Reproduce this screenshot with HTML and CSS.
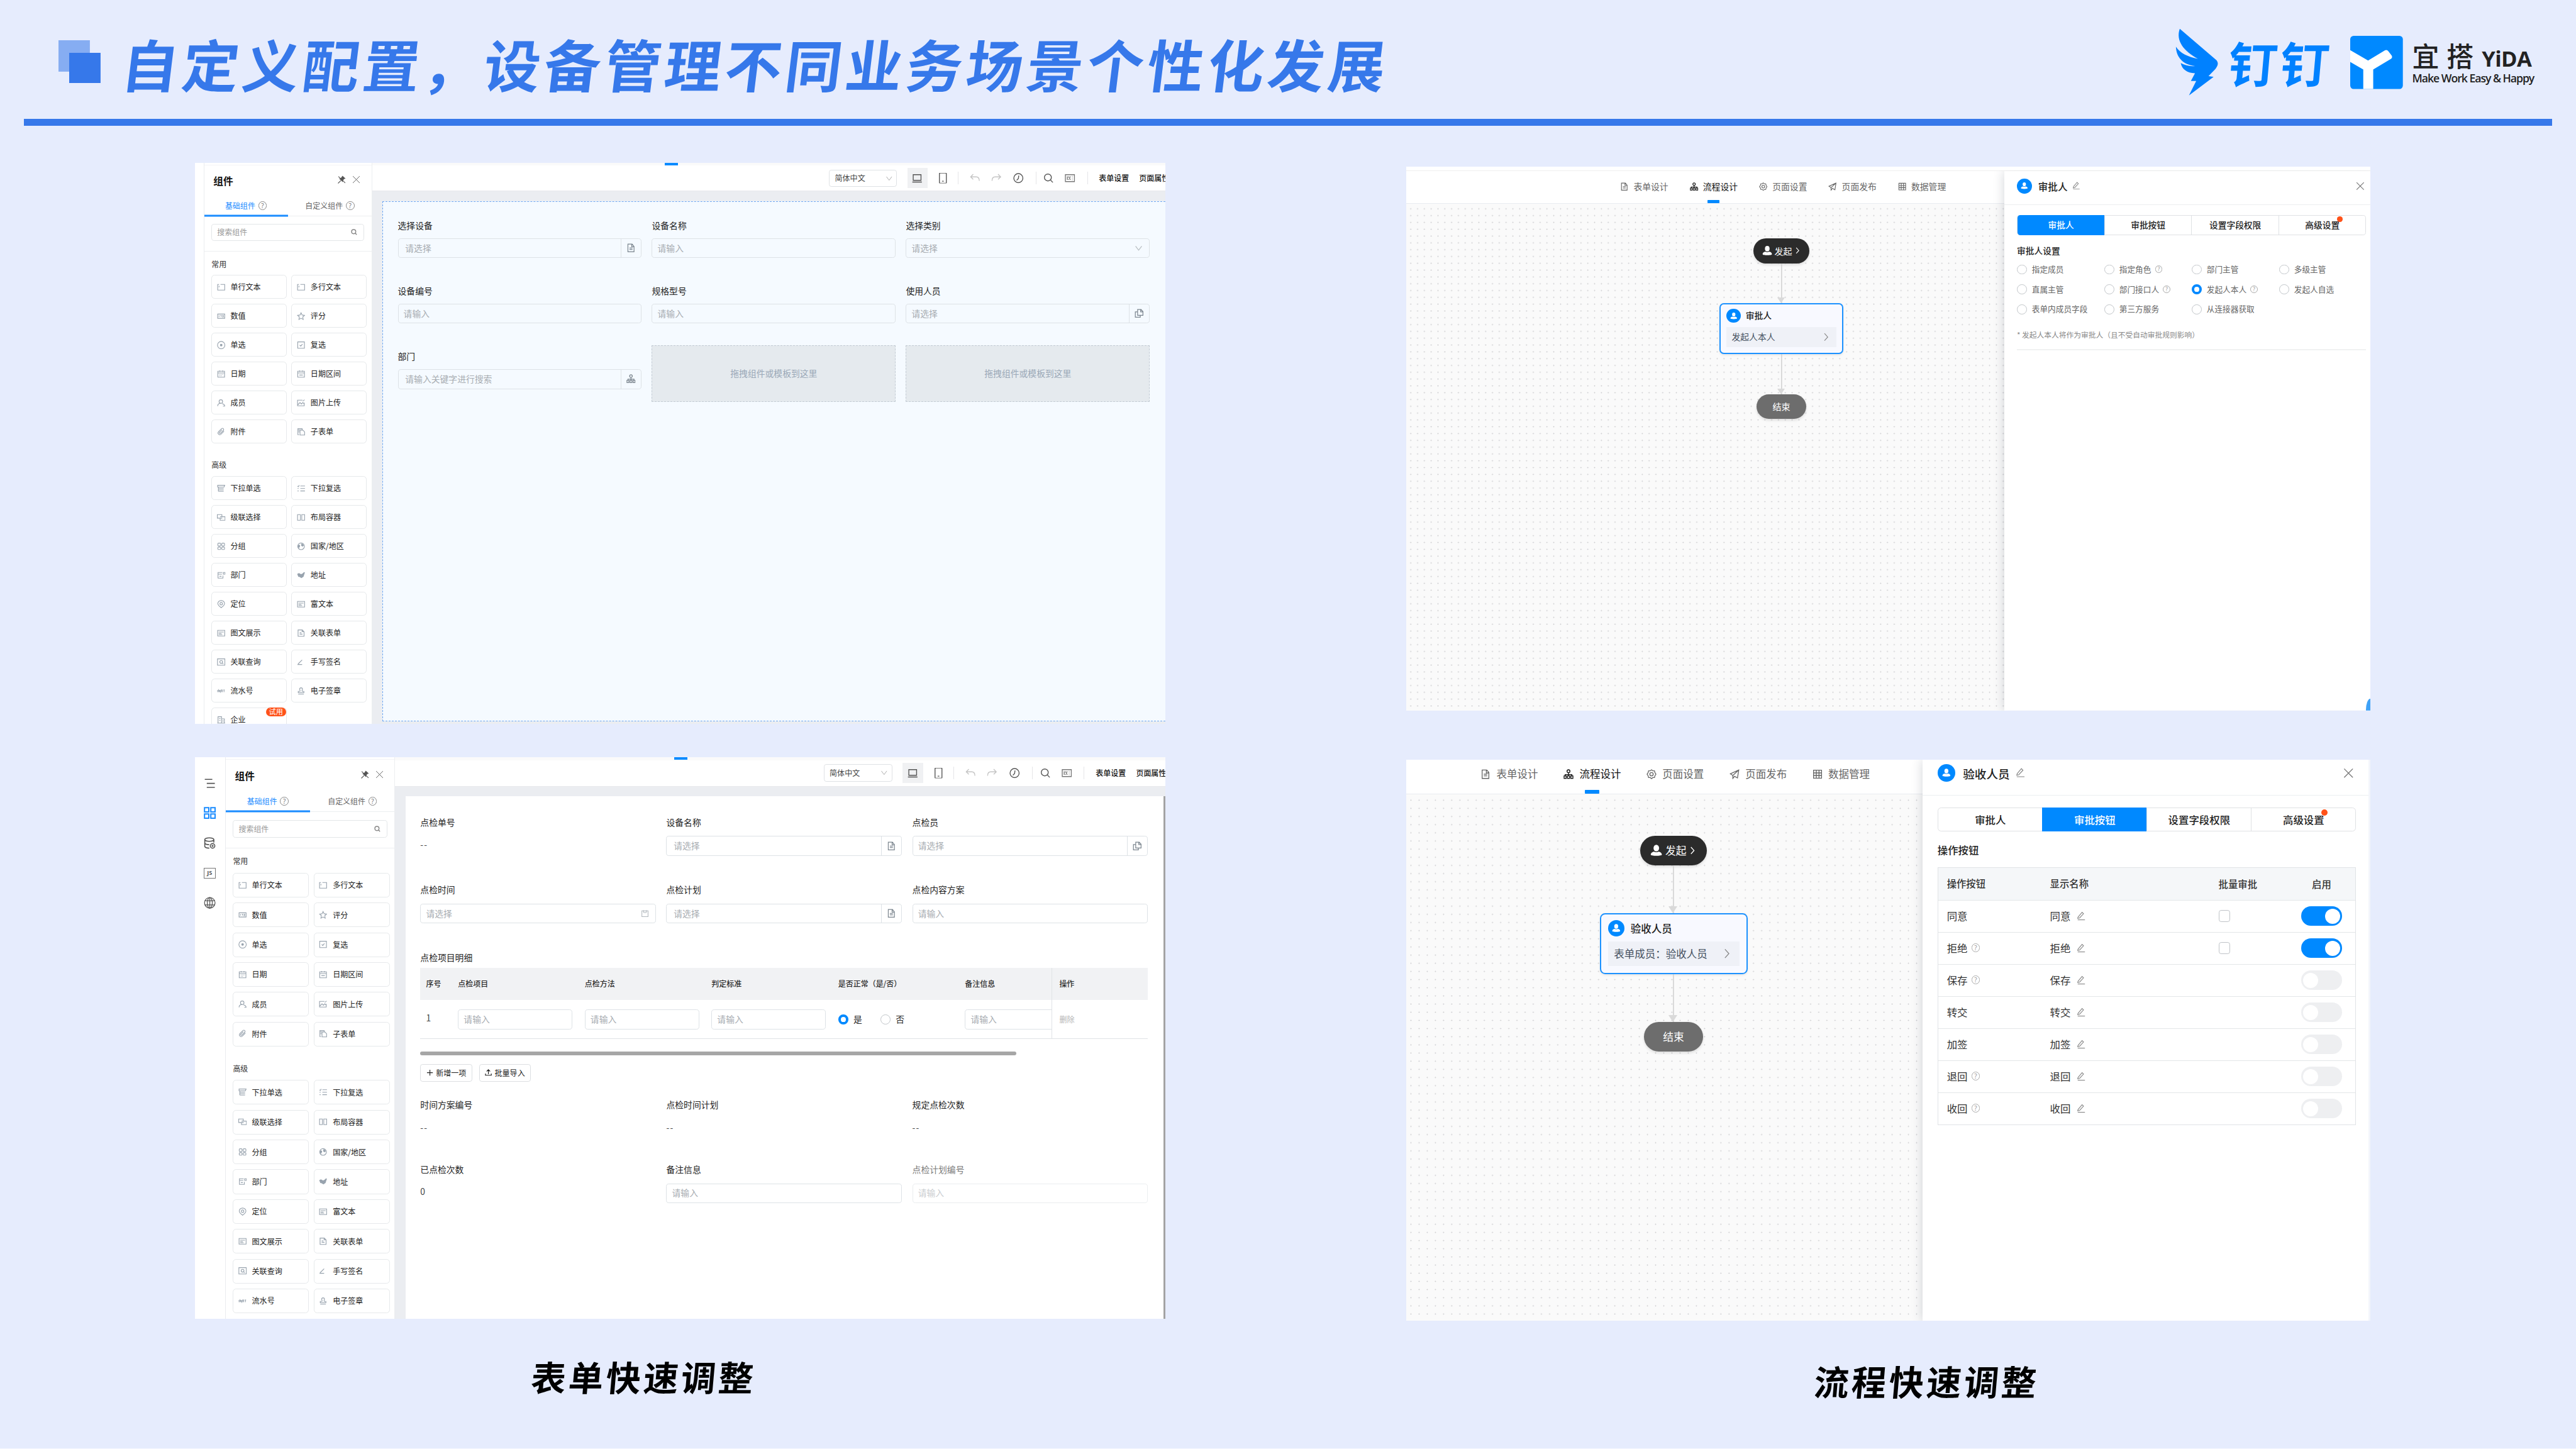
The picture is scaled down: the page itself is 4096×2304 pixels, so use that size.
FILE: index.html
```html
<!DOCTYPE html>
<html lang="zh-CN">
<head>
<meta charset="utf-8">
<title>自定义配置</title>
<link rel="stylesheet" href="styles.css">
</head>
<body>
<svg class="sprite" aria-hidden="true">
  <symbol id="i-input" viewBox="0 0 24 24"><path d="M6 4H2v16h20V4H10M6 8v4"/></symbol>
  <symbol id="i-number" viewBox="0 0 24 24"><path d="M2 6h20v12H2zM6 10v4M10 10h2v4M15 10h3v4h-3"/></symbol>
  <symbol id="i-star" viewBox="0 0 24 24"><path d="M12 2.500l3 6.300 6.800.9-5 4.700 1.300 6.800L12 17.900l-6.100 3.300 1.300-6.800-5-4.700 6.800-.9z"/></symbol>
  <symbol id="i-radio" viewBox="0 0 24 24"><circle cx="12" cy="12" r="10.500"/><circle class="fill" cx="12" cy="12" r="3.500"/></symbol>
  <symbol id="i-check" viewBox="0 0 24 24"><path d="M2.500 3h19v18h-19zM8 12l3 3 5-6"/></symbol>
  <symbol id="i-date" viewBox="0 0 24 24"><path d="M2.500 4h19v17h-19zM2.500 9h19M8 2v4M16 2v4M7 13h2M11 13h2M15 13h2M7 17h2M11 17h2"/></symbol>
  <symbol id="i-range" viewBox="0 0 24 24"><path d="M2.500 4h19v17h-19zM2.500 9h19M8 2v4M16 2v4M7 15h10"/></symbol>
  <symbol id="i-user" viewBox="0 0 24 24"><circle cx="11" cy="8" r="5"/><path d="M2 21c0-5 4-8 9-8M15 14c4 1 7 3 7 7h-5"/></symbol>
  <symbol id="i-image" viewBox="0 0 24 24"><path d="M21 11v9H2V4h14M3 17l6-6 4 4 4-4 4 4M17 7l5-4"/></symbol>
  <symbol id="i-clip" viewBox="0 0 24 24"><path d="M20 10l-9 9a5 5 0 0 1-7-7l9-9a3.500 3.500 0 0 1 5 5l-8 8a2 2 0 0 1-3-3l7-7"/></symbol>
  <symbol id="i-subform" viewBox="0 0 24 24"><path d="M6 20H3V3h12v3M9 7h8l5 5v9H9zM3 7h6M3 12h6"/></symbol>
  <symbol id="i-drop" viewBox="0 0 24 24"><path d="M2 3h20l-2 5H2zM4 12h15M4 16h15M4 20h15M4 8v12"/></symbol>
  <symbol id="i-list" viewBox="0 0 24 24"><path d="M10 5h13M10 12h13M10 19h13M2 5l2 2 3-4M2 12h3M2 19h3"/></symbol>
  <symbol id="i-cascade" viewBox="0 0 24 24"><path d="M8 14H1V4h13v5M9 10h14v10H9v-6h6"/></symbol>
  <symbol id="i-columns" viewBox="0 0 24 24"><path d="M2 4h8v16H2zM14 4h8v16h-8z"/></symbol>
  <symbol id="i-group" viewBox="0 0 24 24"><rect x="2.500" y="3" width="8" height="8" rx="2"/><rect x="13.500" y="3" width="8" height="8" rx="2"/><rect x="2.500" y="14" width="8" height="7" rx="2"/><rect x="13.500" y="14" width="8" height="7" rx="2"/></symbol>
  <symbol id="i-globe" viewBox="0 0 24 24"><circle cx="12" cy="12" r="9.500"/><path class="fill" d="M4 8c4-1 6 1 5 4s-3 3-3 6c-3-3-4-7-2-10zM13 4c4 0 6 3 7 6l-4 3-4-3z"/></symbol>
  <symbol id="i-dept" viewBox="0 0 24 24"><path d="M15 4H3v16h14V13M3 9h11M7 15h6M18 4h5v5h-5z"/></symbol>
  <symbol id="i-map" viewBox="0 0 24 24"><path class="fill" d="M1 8l5-2 6 3 4-2 4-4 3 1-2 6-2 6-6 4-5-3-4-1z"/></symbol>
  <symbol id="i-pin" viewBox="0 0 24 24"><path d="M12 22C6 18 2.500 14 2.500 10a9.500 8.500 0 0 1 19 0c0 4-3.500 8-9.500 12z"/><circle cx="12" cy="10.500" r="3.500"/></symbol>
  <symbol id="i-rich" viewBox="0 0 24 24"><path d="M2 4h20v16H2zM5 9h14M5 13h8M5 16h10"/></symbol>
  <symbol id="i-form" viewBox="0 0 24 24"><path d="M3.500 3h12l5 5v13h-17zM8 11h5M8 15h8M15 3v5h5"/></symbol>
  <symbol id="i-query" viewBox="0 0 24 24"><path d="M1.500 3h21v18h-21z"/><circle cx="12" cy="11.500" r="4"/><path d="M15 14.500l3 3"/></symbol>
  <symbol id="i-sign" viewBox="0 0 24 24"><path d="M4 17L15 6M4 17l-1 2h12"/></symbol>
  <symbol id="i-serial" viewBox="0 0 24 24"><path d="M2 9v6M5 15V9l4 6V9M12 15V9h3v6M18 9h4M20 9v6"/></symbol>
  <symbol id="i-stamp" viewBox="0 0 24 24"><path d="M9 13c1-3-1-4-1-6a4 4 0 0 1 8 0c0 2-2 3-1 6h5v4H4v-4zM4 21h16"/></symbol>
  <symbol id="i-company" viewBox="0 0 24 24"><path d="M3 21V3h10v18M13 9h8v12M1 21h22M6 8h4M6 13h4M17 13v4"/></symbol>
  <symbol id="i-search" viewBox="0 0 24 24"><circle cx="10.500" cy="10.500" r="8"/><path d="M16.500 16.500L22 22"/></symbol>
  <symbol id="i-close" viewBox="0 0 24 24"><path d="M2 2l20 20M22 2L2 22"/></symbol>
  <symbol id="i-unpin" viewBox="0 0 24 24"><path d="M2 3l20 19M1 23l8-8"/><path class="fill" d="M14 1l9 8-4 1-4 5v5L4 9l5-1z"/></symbol>
  <symbol id="i-chev" viewBox="0 0 24 24"><path d="M3 6l9 12 9-12"/></symbol>
  <symbol id="i-right" viewBox="0 0 24 24"><path d="M7 2l9 10-9 10"/></symbol>
  <symbol id="i-laptop" viewBox="0 0 24 24"><path d="M3 4h18v13H3zM1 21h22"/></symbol>
  <symbol id="i-phone" viewBox="0 0 24 24"><rect x="4" y="0" width="16" height="24" rx="2"/><path d="M10 19h4"/></symbol>
  <symbol id="i-undo" viewBox="0 0 24 24"><path d="M8 3L2 9l6 6M2 9h13c5 0 7 3 7 9"/></symbol>
  <symbol id="i-redo" viewBox="0 0 24 24"><path d="M16 3l6 6-6 6M22 9H9c-5 0-7 3-7 9"/></symbol>
  <symbol id="i-clock" viewBox="0 0 24 24"><circle cx="12" cy="12" r="10.500"/><path d="M13 6l-1 7-4 4"/></symbol>
  <symbol id="i-keys" viewBox="0 0 24 24"><path d="M1.500 4h21v16h-21zM6 8v8M9 8v3M9 14v2M13 8l-2 4 2 4M17 8h1M17 12h1M17 16h1"/></symbol>
  <symbol id="i-file" viewBox="0 0 24 24"><path d="M4 2h11l5 6v14H4zM14 2v7h6M8 12h8M8 16h8"/></symbol>
  <symbol id="i-copy" viewBox="0 0 24 24"><path d="M8 8H2v14h13v-5M8 2h9l5 5v10H8zM16 2v6h6"/></symbol>
  <symbol id="i-tree" viewBox="0 0 24 24"><circle cx="12" cy="5" r="3.500"/><path d="M12 8.500V13M4 16v-3h16v3M12 13v3"/><rect x="1.500" y="16" width="5" height="6"/><rect x="9.500" y="16" width="5" height="6"/><rect x="17.500" y="16" width="5" height="6"/></symbol>
  <symbol id="i-gear" viewBox="0 0 24 24"><path d="M12 1.500l3 2.500h4l1 4 2.500 4L20 16l-1 4h-4l-3 2.500L9 20H5l-1-4-2.500-4L4 8l1-4h4z"/><circle cx="12" cy="12" r="4"/></symbol>
  <symbol id="i-plane" viewBox="0 0 24 24"><path d="M22 2L2 11l6 4v7l4-5 7 4zM8 15L22 2"/></symbol>
  <symbol id="i-table" viewBox="0 0 24 24"><path d="M2.500 2.500h19v19h-19zM2.500 9h19M2.500 15h19M9 2.500v19M15.500 2.500v19"/></symbol>
  <symbol id="i-pen" viewBox="0 0 24 24"><path d="M4 15L15 2l4 4L8 18l-5 1zM3 23h20"/></symbol>
  <symbol id="i-person" viewBox="0 0 24 24"><ellipse class="fill" cx="12" cy="7" rx="5.500" ry="6.500"/><path class="fill" d="M1 20c0-4 4-6 7-6 2 1.500 6 1.500 8 0 3 0 7 2 7 6 0 3-22 3-22 0z"/></symbol>
  <symbol id="i-outline" viewBox="0 0 24 24"><path d="M2 4h15M6 12h16M6 20h16"/></symbol>
  <symbol id="i-blocks" viewBox="0 0 24 24"><path d="M1.500 1.500h8.500v8.500H1.500zM14 1.500h8.500v8.500H14zM1.500 14h8.500v8.500H1.500zM14 14h8.500v8.500H14z"/></symbol>
  <symbol id="i-data" viewBox="0 0 24 24"><ellipse cx="11" cy="5" rx="9" ry="3.500"/><path d="M2 5v14c1 2 5 3 9 3M20 5v6M2 12c1 2 4 3 9 3"/><circle cx="17.500" cy="17.500" r="4.500"/><circle cx="17.500" cy="17.500" r="1"/></symbol>
  <symbol id="i-world" viewBox="0 0 24 24"><circle cx="12" cy="12" r="10.500"/><ellipse cx="12" cy="12" rx="5" ry="10.500"/><path d="M2 8h20M2 16h20M12 1.500v21"/></symbol>
  <symbol id="i-cal" viewBox="0 0 24 24"><path d="M3 4h18v17H3zM8 2v7M16 2v7M8 9h8"/></symbol>
  <symbol id="i-plus" viewBox="0 0 24 24"><path d="M12 2v20M2 12h20"/></symbol>
  <symbol id="i-upload" viewBox="0 0 24 24"><path d="M12 17V3M6 8l6-6 6 6M2 15v6h20v-6"/></symbol>
</svg>

<header class="header">
  <div class="mark"></div>
  <h1 class="title">自定义配置，设备管理不同业务场景个性化发展</h1>
  <div class="brands">
    <svg class="wing" viewBox="0 0 95 145"><path d="M13 5L89 70C93 75 93 80 87 88L72.500 103 83 104.500 32 143 47 113H36L44.500 97C28 97 17 88 15 76 24 81 34 83 44.500 82 20 79 6 65 5 42 14 56 30 63 50.500 67 22 52 4 30 13 5z"/></svg>
    <span class="ding">钉钉</span>
    <svg class="ylogo" viewBox="0 0 109 110"><rect width="109" height="110" rx="7" fill="#0089ff"/><path fill="#fff" d="M0 29.500L37 51 72 30q4-2 7 2l7 9q2 4-2 7L47.600 69.600V110H27V69.600L0 54z"/></svg>
    <div class="yida">
      <div class="yida-name"><span class="yida-cn">宜搭</span><span class="yida-en">YiDA</span></div>
      <div class="yida-tag">Make Work Easy &amp; Happy</div>
    </div>
  </div>
</header>

<main class="board">
  <section class="col col-left">
    <div class="shot shot-a">
      <aside class="palette">
        <div class="pal-head"><b>组件</b><svg class="ic"><use href="#i-unpin"/></svg><svg class="ic thin"><use href="#i-close"/></svg></div>
        <div class="pal-tabs"><div class="on">基础组件<i class="q">?</i></div><div>自定义组件<i class="q">?</i></div></div>
        <div class="pal-search"><div class="box">搜索组件<svg class="ic"><use href="#i-search"/></svg></div></div>
        <div class="pal-title">常用</div>
        <ul class="items">
          <li><svg><use href="#i-input"/></svg>单行文本</li><li><svg><use href="#i-input"/></svg>多行文本</li>
          <li><svg><use href="#i-number"/></svg>数值</li><li><svg><use href="#i-star"/></svg>评分</li>
          <li><svg><use href="#i-radio"/></svg>单选</li><li><svg><use href="#i-check"/></svg>复选</li>
          <li><svg><use href="#i-date"/></svg>日期</li><li><svg><use href="#i-range"/></svg>日期区间</li>
          <li><svg><use href="#i-user"/></svg>成员</li><li><svg><use href="#i-image"/></svg>图片上传</li>
          <li><svg><use href="#i-clip"/></svg>附件</li><li><svg><use href="#i-subform"/></svg>子表单</li>
        </ul>
        <div class="pal-title second">高级</div>
        <ul class="items">
          <li><svg><use href="#i-drop"/></svg>下拉单选</li><li><svg><use href="#i-list"/></svg>下拉复选</li>
          <li><svg><use href="#i-cascade"/></svg>级联选择</li><li><svg><use href="#i-columns"/></svg>布局容器</li>
          <li><svg><use href="#i-group"/></svg>分组</li><li><svg><use href="#i-globe"/></svg>国家/地区</li>
          <li><svg><use href="#i-dept"/></svg>部门</li><li><svg><use href="#i-map"/></svg>地址</li>
          <li><svg><use href="#i-pin"/></svg>定位</li><li><svg><use href="#i-rich"/></svg>富文本</li>
          <li><svg><use href="#i-rich"/></svg>图文展示</li><li><svg><use href="#i-form"/></svg>关联表单</li>
          <li><svg><use href="#i-query"/></svg>关联查询</li><li><svg><use href="#i-sign"/></svg>手写签名</li>
          <li><svg><use href="#i-serial"/></svg>流水号</li><li><svg><use href="#i-stamp"/></svg>电子签章</li>
          <li><svg><use href="#i-company"/></svg>企业<em class="trial">试用</em></li>
        </ul>
      </aside>
      <div class="editor">
        <div class="strip"><span></span></div>
        <div class="toolbar">
          <div class="lang">简体中文<svg class="ic"><use href="#i-chev"/></svg></div>
          <div class="t-lap"><svg class="ic"><use href="#i-laptop"/></svg></div>
          <div class="t-phone"><svg class="ic"><use href="#i-phone"/></svg></div>
          <div class="t-undo"><svg class="ic"><use href="#i-undo"/></svg></div>
          <div class="t-undo"><svg class="ic"><use href="#i-redo"/></svg></div>
          <div class="t-clock"><svg class="ic"><use href="#i-clock"/></svg></div>
          <div class="t-search"><svg class="ic"><use href="#i-search"/></svg></div>
          <div class="t-keys"><svg class="ic"><use href="#i-keys"/></svg></div>
          <span class="t-text">表单设置</span><span class="t-text">页面属性</span>
        </div>
        <div class="stage">
          <div class="canvas drop-canvas">
            <div class="grid">
              <div class="field"><label>选择设备</label><div class="inp addon">请选择<span><svg class="ic"><use href="#i-file"/></svg></span></div></div>
              <div class="field"><label>设备名称</label><div class="inp">请输入</div></div>
              <div class="field"><label>选择类别</label><div class="inp">请选择<svg class="ic light"><use href="#i-chev"/></svg></div></div>
              <div class="field"><label>设备编号</label><div class="inp">请输入</div></div>
              <div class="field"><label>规格型号</label><div class="inp">请输入</div></div>
              <div class="field"><label>使用人员</label><div class="inp">请选择<span><svg class="ic"><use href="#i-copy"/></svg></span></div></div>
              <div class="field"><label>部门</label><div class="inp addon">请输入关键字进行搜索<span><svg class="ic"><use href="#i-tree"/></svg></span></div></div>
              <div class="zone">拖拽组件或模板到这里</div>
              <div class="zone">拖拽组件或模板到这里</div>
            </div>
          </div>
        </div>
      </div>
    </div>

    <div class="shot shot-b">
      <nav class="rail">
        <svg class="ic"><use href="#i-outline"/></svg>
        <svg class="ic on"><use href="#i-blocks"/></svg>
        <svg class="ic"><use href="#i-data"/></svg>
        <i class="js">JS</i>
        <svg class="ic thin"><use href="#i-world"/></svg>
      </nav>
      <aside class="palette">
        <div class="pal-head"><b>组件</b><svg class="ic"><use href="#i-unpin"/></svg><svg class="ic thin"><use href="#i-close"/></svg></div>
        <div class="pal-tabs"><div class="on">基础组件<i class="q">?</i></div><div>自定义组件<i class="q">?</i></div></div>
        <div class="pal-search"><div class="box">搜索组件<svg class="ic"><use href="#i-search"/></svg></div></div>
        <div class="pal-title">常用</div>
        <ul class="items">
          <li><svg><use href="#i-input"/></svg>单行文本</li><li><svg><use href="#i-input"/></svg>多行文本</li>
          <li><svg><use href="#i-number"/></svg>数值</li><li><svg><use href="#i-star"/></svg>评分</li>
          <li><svg><use href="#i-radio"/></svg>单选</li><li><svg><use href="#i-check"/></svg>复选</li>
          <li><svg><use href="#i-date"/></svg>日期</li><li><svg><use href="#i-range"/></svg>日期区间</li>
          <li><svg><use href="#i-user"/></svg>成员</li><li><svg><use href="#i-image"/></svg>图片上传</li>
          <li><svg><use href="#i-clip"/></svg>附件</li><li><svg><use href="#i-subform"/></svg>子表单</li>
        </ul>
        <div class="pal-title second">高级</div>
        <ul class="items">
          <li><svg><use href="#i-drop"/></svg>下拉单选</li><li><svg><use href="#i-list"/></svg>下拉复选</li>
          <li><svg><use href="#i-cascade"/></svg>级联选择</li><li><svg><use href="#i-columns"/></svg>布局容器</li>
          <li><svg><use href="#i-group"/></svg>分组</li><li><svg><use href="#i-globe"/></svg>国家/地区</li>
          <li><svg><use href="#i-dept"/></svg>部门</li><li><svg><use href="#i-map"/></svg>地址</li>
          <li><svg><use href="#i-pin"/></svg>定位</li><li><svg><use href="#i-rich"/></svg>富文本</li>
          <li><svg><use href="#i-rich"/></svg>图文展示</li><li><svg><use href="#i-form"/></svg>关联表单</li>
          <li><svg><use href="#i-query"/></svg>关联查询</li><li><svg><use href="#i-sign"/></svg>手写签名</li>
          <li><svg><use href="#i-serial"/></svg>流水号</li><li><svg><use href="#i-stamp"/></svg>电子签章</li>
        </ul>
      </aside>
      <div class="editor">
        <div class="strip"><span></span></div>
        <div class="toolbar">
          <div class="lang">简体中文<svg class="ic"><use href="#i-chev"/></svg></div>
          <div class="t-lap"><svg class="ic"><use href="#i-laptop"/></svg></div>
          <div class="t-phone"><svg class="ic"><use href="#i-phone"/></svg></div>
          <div class="t-undo"><svg class="ic"><use href="#i-undo"/></svg></div>
          <div class="t-undo"><svg class="ic"><use href="#i-redo"/></svg></div>
          <div class="t-clock"><svg class="ic"><use href="#i-clock"/></svg></div>
          <div class="t-search"><svg class="ic"><use href="#i-search"/></svg></div>
          <div class="t-keys"><svg class="ic"><use href="#i-keys"/></svg></div>
          <span class="t-text">表单设置</span><span class="t-text">页面属性</span>
        </div>
        <div class="stage">
          <div class="canvas white-canvas">
            <div class="grid">
              <div class="field"><label>点检单号</label><p>--</p></div>
              <div class="field"><label>设备名称</label><div class="inp addon">请选择<span><svg class="ic"><use href="#i-file"/></svg></span></div></div>
              <div class="field"><label>点检员</label><div class="inp">请选择<span><svg class="ic"><use href="#i-copy"/></svg></span></div></div>
              <div class="field"><label>点检时间</label><div class="inp">请选择<svg class="ic light"><use href="#i-cal"/></svg></div></div>
              <div class="field"><label>点检计划</label><div class="inp addon">请选择<span><svg class="ic"><use href="#i-file"/></svg></span></div></div>
              <div class="field"><label>点检内容方案</label><div class="inp">请输入</div></div>
            </div>
            <div class="field-title">点检项目明细</div>
            <div class="sub">
              <div class="sub-row sub-head"><span>序号</span><span>点检项目</span><span>点检方法</span><span>判定标准</span><span>是否正常（是/否）</span><span>备注信息</span><span class="fixed">操作</span></div>
              <div class="sub-row"><span class="no">1</span><span><i class="inp">请输入</i></span><span><i class="inp">请输入</i></span><span><i class="inp">请输入</i></span><span class="yn"><i class="rd on"></i>是<i class="rd"></i>否</span><span class="cut"><i class="inp">请输入</i></span><span class="fixed del">删除</span></div>
            </div>
            <div class="hscroll"></div>
            <div class="btns"><span><svg class="ic"><use href="#i-plus"/></svg>新增一项</span><span><svg class="ic"><use href="#i-upload"/></svg>批量导入</span></div>
            <div class="grid lower">
              <div class="field"><label>时间方案编号</label><p>--</p></div>
              <div class="field"><label>点检时间计划</label><p>--</p></div>
              <div class="field"><label>规定点检次数</label><p>--</p></div>
              <div class="field"><label>已点检次数</label><p>0</p></div>
              <div class="field"><label>备注信息</label><div class="inp">请输入</div></div>
              <div class="field dim"><label>点检计划编号</label><div class="inp">请输入</div></div>
            </div>
          </div>
        </div>
      </div>
    </div>
    <p class="caption">表单快速调整</p>
  </section>

  <section class="col col-right">
    <div class="shot shot-c">
      <div class="topline"></div>
      <div class="split">
        <div class="pane">
          <nav class="ptabs">
            <span><svg class="ic"><use href="#i-file"/></svg>表单设计</span>
            <span class="on"><svg class="ic"><use href="#i-tree"/></svg>流程设计</span>
            <span><svg class="ic"><use href="#i-gear"/></svg>页面设置</span>
            <span><svg class="ic"><use href="#i-plane"/></svg>页面发布</span>
            <span><svg class="ic"><use href="#i-table"/></svg>数据管理</span>
          </nav>
          <div class="flow">
            <div class="pill start"><svg class="ic"><use href="#i-person"/></svg>发起<svg class="ic arr"><use href="#i-right"/></svg></div>
            <div class="link"></div>
            <div class="node">
              <div class="node-head"><i class="ava"><svg class="ic"><use href="#i-person"/></svg></i>审批人</div>
              <div class="node-body">发起人本人<svg class="ic"><use href="#i-right"/></svg></div>
            </div>
            <div class="link"></div>
            <div class="pill end">结束</div>
          </div>
        </div>
        <aside class="drawer">
          <div class="dr-head"><i class="ava"><svg class="ic"><use href="#i-person"/></svg></i><b>审批人</b><svg class="ic pen"><use href="#i-pen"/></svg><svg class="ic x"><use href="#i-close"/></svg></div>
          <div class="seg"><span class="on">审批人</span><span>审批按钮</span><span>设置字段权限</span><span><em>高级设置</em></span></div>
          <div class="dr-title">审批人设置</div>
          <div class="radios">
            <span><i class="rd"></i>指定成员</span><span><i class="rd"></i>指定角色<i class="q">?</i></span><span><i class="rd"></i>部门主管</span><span><i class="rd"></i>多级主管</span>
            <span><i class="rd"></i>直属主管</span><span><i class="rd"></i>部门接口人<i class="q">?</i></span><span><i class="rd on"></i>发起人本人<i class="q">?</i></span><span><i class="rd"></i>发起人自选</span>
            <span><i class="rd"></i>表单内成员字段</span><span><i class="rd"></i>第三方服务</span><span><i class="rd"></i>从连接器获取</span>
          </div>
          <p class="note">* 发起人本人将作为审批人（且不受自动审批规则影响）</p>
          <div class="fab"></div>
        </aside>
      </div>
    </div>

    <div class="shot shot-d">
      <div class="split">
        <div class="pane">
          <nav class="ptabs">
            <span><svg class="ic"><use href="#i-file"/></svg>表单设计</span>
            <span class="on"><svg class="ic"><use href="#i-tree"/></svg>流程设计</span>
            <span><svg class="ic"><use href="#i-gear"/></svg>页面设置</span>
            <span><svg class="ic"><use href="#i-plane"/></svg>页面发布</span>
            <span><svg class="ic"><use href="#i-table"/></svg>数据管理</span>
          </nav>
          <div class="flow">
            <div class="pill start"><svg class="ic"><use href="#i-person"/></svg>发起<svg class="ic arr"><use href="#i-right"/></svg></div>
            <div class="link"></div>
            <div class="node">
              <div class="node-head"><i class="ava"><svg class="ic"><use href="#i-person"/></svg></i>验收人员</div>
              <div class="node-body">表单成员：验收人员<svg class="ic"><use href="#i-right"/></svg></div>
            </div>
            <div class="link"></div>
            <div class="pill end">结束</div>
          </div>
        </div>
        <aside class="drawer">
          <div class="dr-head"><i class="ava"><svg class="ic"><use href="#i-person"/></svg></i><b>验收人员</b><svg class="ic pen"><use href="#i-pen"/></svg><svg class="ic x"><use href="#i-close"/></svg></div>
          <div class="seg"><span>审批人</span><span class="on">审批按钮</span><span>设置字段权限</span><span><em>高级设置</em></span></div>
          <div class="dr-title">操作按钮</div>
          <div class="ops">
            <div class="op op-head"><span>操作按钮</span><span>显示名称</span><span>批量审批</span><span>启用</span></div>
            <div class="op"><span>同意</span><span>同意<svg class="ic"><use href="#i-pen"/></svg></span><span><i class="cb"></i></span><span><i class="sw on"></i></span></div>
            <div class="op"><span>拒绝<i class="q">?</i></span><span>拒绝<svg class="ic"><use href="#i-pen"/></svg></span><span><i class="cb"></i></span><span><i class="sw on"></i></span></div>
            <div class="op"><span>保存<i class="q">?</i></span><span>保存<svg class="ic"><use href="#i-pen"/></svg></span><span></span><span><i class="sw"></i></span></div>
            <div class="op"><span>转交</span><span>转交<svg class="ic"><use href="#i-pen"/></svg></span><span></span><span><i class="sw"></i></span></div>
            <div class="op"><span>加签</span><span>加签<svg class="ic"><use href="#i-pen"/></svg></span><span></span><span><i class="sw"></i></span></div>
            <div class="op"><span>退回<i class="q">?</i></span><span>退回<svg class="ic"><use href="#i-pen"/></svg></span><span></span><span><i class="sw"></i></span></div>
            <div class="op"><span>收回<i class="q">?</i></span><span>收回<svg class="ic"><use href="#i-pen"/></svg></span><span></span><span><i class="sw"></i></span></div>
          </div>
        </aside>
      </div>
    </div>
    <p class="caption">流程快速调整</p>
  </section>
</main>
</body>
</html>
```
FILE: styles.css
```css
/* 1rem = 100 design units on a 5333 x 3000 slide */
html { font-size: 76.8px; }
* { box-sizing: border-box; margin: 0; padding: 0; }
body {
  width: 4096px; height: 2304px; overflow: hidden;
  background: #e6ecfd; color: #2b2b2b; border-bottom: 1px solid #f6f8fe;
  font-family: "Noto Sans CJK SC", "Noto Sans", sans-serif;
  font-size: .18rem; line-height: 1; white-space: nowrap;
}
ul { list-style: none; }
i, em { font-style: normal; }
.sprite { position: absolute; width: 0; height: 0; }
svg { fill: none; stroke: currentColor; stroke-width: 2; flex: none; display: block; overflow: visible; }
svg .fill, .fill { fill: currentColor; stroke: none; }
.ic { width: .2rem; height: .2rem; }
.thin { stroke-width: 1.6; }

/* header */
.header {
  height: 2.606rem; margin: 0 .5rem; padding-left: .705rem;
  border-bottom: .15rem solid #3678ea; display: flex; align-items: flex-start;
}
.mark {
  width: .88rem; height: .9rem; margin-top: .83rem;
  background: linear-gradient(#3678ea, #3678ea) 100% 100% / .65rem .63rem no-repeat,
              linear-gradient(#86adf2, #86adf2) 0 0 / .65rem .65rem no-repeat;
}
.title {
  margin: .58rem 0 0 .46rem; font-size: 1.17rem; line-height: 1.44rem; font-weight: 700;
  letter-spacing: .079rem; color: #3678ea; transform: skewX(-7deg);
}
.brands { margin-left: auto; display: flex; align-items: flex-start; width: 7.83rem; }
.wing { width: .95rem; height: 1.45rem; margin-top: .55rem; }
.wing path { fill: #0081ff; stroke: none; }
.ylogo { stroke: none; width: 1.09rem; height: 1.1rem; margin: .74rem 0 0 .47rem; }
.ding {
  width: 2.05rem; margin: .56rem 0 0 .19rem; font-size: 1.01rem; line-height: 1.44rem; font-weight: 700;
  letter-spacing: .06rem; color: #0081ff; transform: skewX(-5deg);
}
.yida { margin: .8rem 0 0 .19rem; color: #222; }
.yida-name { display: flex; align-items: baseline; height: .68rem; line-height: .7rem; }
.yida-cn { font-size: .56rem; letter-spacing: .15rem; font-weight: 500; }
.yida-en { font: 700 .45rem/.7rem "Open Sans", sans-serif; letter-spacing: -.008rem; margin-left: .02rem; }
.yida-tag { font: 600 .23rem/.28rem "Open Sans", sans-serif; letter-spacing: -.0135rem; }

/* columns */
.board { display: flex; padding-left: 4.04rem; gap: 4.99rem; }
.col-left { width: 20.09rem; padding-top: .77rem; }
.col-right { width: 19.96rem; padding-top: .844rem; }
.shot { background: #fff; overflow: hidden; display: flex; }
.shot-a { height: 11.615rem; margin-bottom: .69rem; --u: .01rem; --h: .01rem; }
.shot-b { height: 11.63rem; --u: .0103rem; --h: .01008rem; }
.shot-c, .shot-d { flex-direction: column; }
.shot-c { height: 11.26rem; margin-bottom: 1.02rem; --u: .01rem; }
.shot-d { height: 11.62rem; --u: .01195rem; }
.caption {
  font-size: .72rem; line-height: 1rem; font-weight: 700; letter-spacing: .056rem; color: #000;
  transform: skewX(-5deg); width: max-content;
}
.col-left .caption { margin: .69rem 0 0 6.96rem; }
.col-right .caption { margin: .74rem 0 0 8.44rem; }

/* component palette */
.palette { width: 3.48rem; border-left: .02rem solid #eaecef; padding-top: calc(3 * var(--u)); overflow: hidden; flex: none; }
.shot-a .palette { margin-left: .175rem; }
.shot-b .palette { width: 3.51rem; margin-left: -.01rem; }
.pal-head { height: calc(67 * var(--u)); padding: 0 .23rem 0 .19rem; display: flex; align-items: center; color: #555; border-top: .02rem solid #f4f4f6; }
.pal-head b { font-size: .205rem; color: #111; margin-right: auto; }
.pal-head .ic { width: .17rem; height: .17rem; margin: 0 0 calc(6 * var(--u)) .13rem; }
.pal-tabs { height: calc(40 * var(--u)); display: flex; border-bottom: .02rem solid #eceef0; font-size: .156rem; color: #666; }
.pal-tabs div { flex: 1; display: flex; align-items: center; justify-content: center; gap: .06rem; padding-bottom: .03rem; }
.pal-tabs .on { color: #1b8cff; box-shadow: 0 .02rem 0 #1b8cff, inset 0 -.02rem 0 #1b8cff; }
.q {
  width: .18rem; height: .18rem; border: 1px solid #888; border-radius: 50%; color: #777;
  font: .13rem/.165rem "Noto Sans", sans-serif; text-align: center; flex: none;
}
.pal-search { height: calc(73 * var(--u)); padding: calc(16 * var(--u)) .155rem 0 .145rem; border-bottom: .02rem solid #eceef0; }
.box { height: calc(35 * var(--u)); border: .02rem solid #e3e6e8; border-radius: .06rem; display: flex; align-items: center; justify-content: space-between; padding: 0 .13rem 0 .11rem; font-size: .156rem; color: #999; }
.box .ic { width: .13rem; height: .13rem; stroke-width: 3.500; color: #888; }
.pal-title { height: calc(49 * var(--u)); line-height: calc(51 * var(--u)); padding-left: .15rem; font-size: .156rem; color: #333; }
.pal-title.second { height: calc(67.600 * var(--u)); padding-top: calc(22 * var(--u)); line-height: calc(45 * var(--u)); }
.items { display: grid; grid-template-columns: 1fr 1fr; gap: calc(10.400 * var(--u)) .098rem; padding: 0 .1rem 0 .145rem; grid-auto-rows: calc(49.500 * var(--u)); }
.items li { position: relative; border: .02rem solid #e6e9eb; border-radius: .07rem; display: flex; align-items: center; padding-left: .1rem; font-size: .157rem; color: #222; }
.items svg { width: .175rem; height: .175rem; margin-right: .11rem; color: #98a3ae; }
.trial { position: absolute; right: 0; top: -.02rem; width: .42rem; height: .19rem; border-radius: .1rem; background: #ff5219; color: #fff; font-size: .145rem; line-height: .18rem; text-align: center; }
.rail { width: .63rem; display: flex; flex-direction: column; align-items: center; gap: .37rem; padding: .41rem .03rem 0 0; color: #555; flex: none; }
.rail .ic { width: .25rem; height: .25rem; }
.rail .on { color: #1b8cff; stroke-width: 2.500; }
.js { width: .25rem; height: .22rem; margin: .015rem 0; border: .02rem solid #777; font: 700 .12rem/.18rem "Noto Sans", sans-serif; text-align: center; }

/* form editor */
.editor { flex: 1; min-width: 0; display: flex; flex-direction: column; border-left: .02rem solid #eceef0; }
.strip { height: .055rem; background: #fafafa; flex: none; }
.strip span { display: block; width: .27rem; height: .05rem; margin-left: 6.06rem; background: #0a8bff; }
.shot-b .strip span { margin-left: 5.78rem; }
.toolbar { height: .53rem; display: flex; align-items: center; padding-left: 9.455rem; color: #555; flex: none; border-bottom: .01rem solid #e8e9ec; }
.shot-b .toolbar { height: .55rem; padding-left: 8.87rem; }
.toolbar > div { display: flex; align-items: center; justify-content: center; height: .26rem; flex: none; }
.toolbar .ic { width: .215rem; height: .215rem; }
.toolbar .lang { width: calc(141 * var(--h)); height: .36rem; border: .015rem solid #dfe2e5; border-radius: .05rem; padding: 0 .08rem 0 .11rem; justify-content: space-between; font-size: .157rem; color: #444; margin-right: calc(21 * var(--h)); }
.toolbar .lang .ic { width: .15rem; height: .15rem; color: #aaa; }
.toolbar .t-lap { width: calc(42 * var(--h)); height: .42rem; background: #f0f1f3; }
.t-phone { width: calc(64 * var(--h)); border-right: .015rem solid #e5e5e8; }
.t-undo { width: calc(44 * var(--h)); color: #c4c4c4; margin-left: calc(12 * var(--h)); }
.t-undo + .t-undo { margin-left: 0; }
.t-clock { width: calc(61 * var(--h)); padding-right: calc(10 * var(--h)); border-right: .015rem solid #e5e5e8; }
.t-search { width: calc(52 * var(--h)); }
.t-keys { width: calc(55 * var(--h)); padding-right: calc(17 * var(--h)); border-right: .015rem solid #e5e5e8; }
.toolbar .t-keys { color: #777; }
.t-text { font-size: .156rem; color: #111; font-weight: 500; margin-left: calc(21 * var(--h)); }
.t-keys + .t-text { margin-left: calc(23 * var(--h)); }
.stage { flex: 1; background: #ebedf1; padding: .2rem 0 0 .21rem; min-height: 0; display: flex; }
.canvas { flex: 1; min-width: 0; }
.drop-canvas { background: #f5faff; border: .025rem dashed #6ea8f3; border-right: 0; padding: .3rem 0 0 .305rem; margin-bottom: .06rem; }
.grid { display: grid; grid-template-columns: repeat(3, 5.05rem); column-gap: .21rem; grid-auto-rows: 1.355rem; }
.field label, .field-title { display: block; height: .4rem; line-height: .38rem; font-size: .18rem; color: #222; }
.field .inp { margin-top: .06rem; }
.inp { height: .41rem; border: .02rem solid #dde2e6; border-radius: .06rem; padding-left: .105rem; display: flex; align-items: center; font-size: .18rem; color: #a7acb1; overflow: hidden; }
.inp.addon { padding-left: .14rem; }
.inp span { margin-left: auto; width: .42rem; align-self: stretch; border-left: .015rem solid #dde2e6; display: flex; align-items: center; justify-content: center; color: #7b858e; }
.inp span .ic { width: .19rem; height: .19rem; }
.inp .light { margin-left: auto; margin-right: .13rem; width: .17rem; color: #b3b9be; }
.field p { margin-top: .06rem; line-height: .38rem; color: #444; letter-spacing: .015rem; }
.zone { height: 1.17rem; margin-top: -.03rem; background: #e5eaee; border: .015rem dashed #c3cbd3; display: flex; align-items: center; justify-content: center; color: #9aa8b7; font-size: .18rem; padding-bottom: .02rem; }
.white-canvas { background: #fff; padding: .35rem 0 0 .31rem; border-right: .04rem solid #a3a3a3; }
.white-canvas .grid { grid-template-columns: repeat(3, 4.88rem); column-gap: .213rem; grid-auto-rows: 1.4rem; }
.white-canvas .field .inp { margin-top: .075rem; }
.white-canvas .grid.lower { grid-auto-rows: 1.34rem; margin-top: .29rem; }
.dim { opacity: .6; }
.sub { width: 15.06rem; }
.sub-row { display: grid; grid-template-columns: .66rem repeat(4, 2.624rem) 1.916rem 1fr; height: .81rem; border-bottom: .015rem solid #e0e3e6; }
.sub-row > span { padding-left: .12rem; display: flex; align-items: center; min-width: 0; }
.sub-row > .cut { overflow: hidden; }
.sub-row > .fixed { padding-left: .145rem; border-left: .015rem solid #e0e3e6; }
.sub-head { height: .67rem; background: #f1f2f4; border: 0; font-size: .156rem; font-weight: 500; }
.sub .inp { width: 2.37rem; flex: none; }
.sub-row > .no { padding-bottom: .05rem; color: #444; }
.del { font-size: .157rem; color: #b4b4b4; }
.rd { width: .205rem; height: .205rem; border: .022rem solid #c3c7cb; border-radius: 50%; background: #fff; flex: none; }
.rd.on { border: .06rem solid #0089ff; }
.yn .rd { margin-right: .11rem; }
.yn .rd:nth-of-type(2) { margin-left: .38rem; }
.hscroll { width: 12.34rem; height: .075rem; border-radius: .04rem; background: #a6a6a6; margin-top: .26rem; }
.btns { display: flex; gap: .14rem; margin-top: .18rem; }
.btns span { width: 1.075rem; height: .365rem; border: .015rem solid #dcdfe2; border-radius: .05rem; display: flex; align-items: center; justify-content: center; gap: .055rem; font-size: .157rem; color: #222; }
.btns .ic { width: .145rem; height: .145rem; stroke-width: 2.500; }

/* process designer */
.topline { height: .09rem; border-bottom: .02rem solid #eee; flex: none; }
.split { flex: 1; display: flex; min-height: 0; }
.pane { flex: 1; min-width: 0; display: flex; flex-direction: column; }
.ptabs { height: .68rem; border-bottom: .015rem solid #e9ebf0; display: flex; align-items: flex-end; gap: calc(44.300 * var(--u)); padding-left: 4.426rem; flex: none; }
.shot-d .ptabs { height: .72rem; padding-left: 1.536rem; }
.ptabs span { position: relative; height: calc(66 * var(--u)); padding-bottom: calc(3 * var(--u)); display: flex; align-items: center; gap: calc(10 * var(--u)); font-size: calc(18 * var(--u)); color: #666; flex: none; }
.ptabs .ic { width: calc(17.500 * var(--u)); height: calc(17.500 * var(--u)); }
.ptabs .on { color: #111; }
.ptabs .on::after { content: ""; position: absolute; left: 50%; bottom: 0; width: calc(25.500 * var(--u)); height: calc(6.500 * var(--u)); margin-left: calc(-13 * var(--u)); background: #0089ff; border-radius: calc(1 * var(--u)); }
.flow {
  flex: 1; display: flex; flex-direction: column; align-items: center; padding: calc(71.500 * var(--u)) 0 0 3.14rem;
  background: #fafafa radial-gradient(circle, #c8c8cb .01rem, transparent .015rem) .023rem .034rem / .141rem .141rem;
}
.shot-d .flow { padding-left: .37rem; background-size: .169rem .169rem; background-position: .013rem .037rem; }
.pill { width: calc(115.500 * var(--u)); height: calc(51.500 * var(--u)); border-radius: calc(26 * var(--u)); background: #2b2b2b; color: #fff; display: flex; align-items: center; justify-content: center; font-size: calc(18.300 * var(--u)); flex: none; box-shadow: 0 .03rem .06rem rgba(0, 0, 0, .12); }
.pill .ic { width: calc(21 * var(--u)); height: calc(23 * var(--u)); margin-right: calc(5 * var(--u)); }
.pill .arr { width: calc(14 * var(--u)); height: calc(14 * var(--u)); margin: 0 0 0 calc(4 * var(--u)); stroke-width: 2.500; }
.pill.end { width: calc(102.500 * var(--u)); background: #6d6d6d; }
.link { width: .2rem; height: calc(83 * var(--u)); position: relative; background: linear-gradient(#d4d4d4, #d4d4d4) 50% 0 / .022rem 100% no-repeat; flex: none; }
.link::after { content: ""; position: absolute; bottom: 0; left: 50%; margin-left: calc(-8.500 * var(--u)); border: calc(8.500 * var(--u)) solid transparent; border-top: calc(12.500 * var(--u)) solid #dadada; border-bottom: 0; }
.node { width: calc(256 * var(--u)); height: calc(105 * var(--u)); border: calc(3 * var(--u)) solid #1b91ff; border-radius: calc(9 * var(--u)); background: #f8f9ff; padding: calc(8 * var(--u)) calc(12 * var(--u)); color: #222; font-size: calc(18 * var(--u)); flex: none; box-shadow: 0 .02rem .05rem rgba(0, 0, 0, .08); }
.node-head { display: flex; align-items: center; gap: calc(10.500 * var(--u)); height: calc(31 * var(--u)); font-weight: 500; }
.ava { width: calc(29 * var(--u)); height: calc(29 * var(--u)); border-radius: 50%; background: #0089ff; color: #fff; display: flex; align-items: center; justify-content: center; flex: none; }
.ava .ic { width: calc(15 * var(--u)); height: calc(17 * var(--u)); }
.node-body { margin-top: calc(8 * var(--u)); height: calc(41.500 * var(--u)); background: #eff1f7; display: flex; align-items: center; justify-content: space-between; padding: 0 calc(12 * var(--u)) 0 calc(10.500 * var(--u)); color: #434f5e; font-size: calc(18 * var(--u)); }
.node-body .ic { width: calc(18 * var(--u)); height: calc(18 * var(--u)); color: #888; }

/* drawer */
.drawer { position: relative; width: 7.577rem; background: #fff; box-shadow: 0 0 .22rem rgba(30, 40, 60, .2); clip-path: inset(0 0 0 -.4rem); padding-right: .09rem; flex: none; }
.shot-d .drawer { width: 9.27rem; border-right: .045rem solid #f3f5fb; padding-right: .26rem; }
.dr-head { height: .71rem; margin-right: -.09rem; border-bottom: .015rem solid #eceef0; display: flex; align-items: flex-end; padding-left: calc(25.500 * var(--u)); }
.shot-d .dr-head { height: .745rem; margin-right: -.26rem; }
.dr-head > * { margin-bottom: calc(23 * var(--u)); }
.dr-head .ava { width: calc(31 * var(--u)); height: calc(31 * var(--u)); }
.dr-head b { font-size: calc(20.300 * var(--u)); line-height: calc(30 * var(--u)); font-weight: 500; margin-left: calc(13 * var(--u)); color: #222; }
.pen { width: calc(15 * var(--u)); height: calc(15 * var(--u)); color: #888; }
.dr-head .pen { width: calc(16 * var(--u)); height: calc(16 * var(--u)); margin: 0 0 calc(31 * var(--u)) calc(10 * var(--u)); }
.dr-head .x { width: calc(18 * var(--u)); height: calc(18 * var(--u)); margin: 0 .13rem calc(29 * var(--u)) auto; color: #777; }
.shot-d .dr-head .x { margin-right: .31rem; }
.seg { display: flex; height: calc(41.700 * var(--u)); margin: calc(20.500 * var(--u)) 0 0 calc(26 * var(--u)); border: .018rem solid #dfe1e4; border-radius: calc(6 * var(--u)); font-size: calc(17.900 * var(--u)); font-weight: 500; color: #222; }
.seg span { flex: 1; display: flex; align-items: center; justify-content: center; border-left: .015rem solid #dfe1e4; }
.seg span:first-child { border-left: 0; border-radius: calc(6 * var(--u)) 0 0 calc(6 * var(--u)); }
.seg .on { background: #0089ff; color: #fff; margin: -1px 0; border-color: #0089ff; }
.seg em { position: relative; }
.seg em::after { content: ""; position: absolute; right: calc(-6 * var(--u)); top: calc(-9 * var(--u)); width: calc(11 * var(--u)); height: calc(11 * var(--u)); border-radius: 50%; background: #ff5219; }
.dr-title { margin-left: calc(25.500 * var(--u)); height: calc(50 * var(--u)); line-height: calc(65 * var(--u)); font-size: calc(17.900 * var(--u)); font-weight: 500; color: #222; }
.radios { display: grid; grid-template-columns: repeat(4, 1.81rem); grid-auto-rows: .413rem; margin: 0 0 0 .255rem; color: #666; font-size: .165rem; }
.radios span { display: flex; align-items: center; }
.radios .rd { margin-right: .105rem; }
.radios .q { width: .155rem; height: .155rem; font-size: .11rem; line-height: .135rem; margin-left: .08rem; color: #999; border-color: #aaa; }
.note { margin: .185rem 0 0 .255rem; height: .46rem; line-height: .27rem; border-bottom: .03rem solid #f0f2f2; font-size: .153rem; color: #888; }
.fab { position: absolute; right: 0; bottom: 0; width: .1rem; height: .25rem; background: #3fa2f7; border-radius: 100% 0 0 0; }
.ops { margin: .295rem 0 0 .305rem; border: .018rem solid #e0e3e6; font-size: .214rem; color: #333; }
.shot-d .dr-title { height: .44rem; line-height: .77rem; }
.op { display: grid; grid-template-columns: 2.135rem 3.49rem 1.43rem 1fr; height: .664rem; border-top: .018rem solid #e3e6e8; padding-left: .18rem; }
.op > span { display: flex; align-items: center; padding-bottom: .02rem; }
.op > span:last-child { justify-content: center; padding-bottom: 0; }
.op > span:nth-child(3) { padding-bottom: 0; }
.op.op-head { background: #f5f7f9; border: 0; font-size: .2rem; font-weight: 500; }
.op .q { margin-left: .08rem; color: #999; border-color: #aaa; }
.op .ic { width: .18rem; height: .19rem; margin: .02rem 0 0 .125rem; color: #888; }
.cb { width: .245rem; height: .245rem; border: .022rem solid #bfc3c7; border-radius: .05rem; }
.sw { width: .855rem; height: .405rem; border-radius: .21rem; background: #eeeff1; padding: .045rem; }
.sw::before { content: ""; display: block; width: .315rem; height: .315rem; border-radius: 50%; background: #fff; }
.sw.on { background: #0089ff; }
.sw.on::before { margin-left: auto; }
```
